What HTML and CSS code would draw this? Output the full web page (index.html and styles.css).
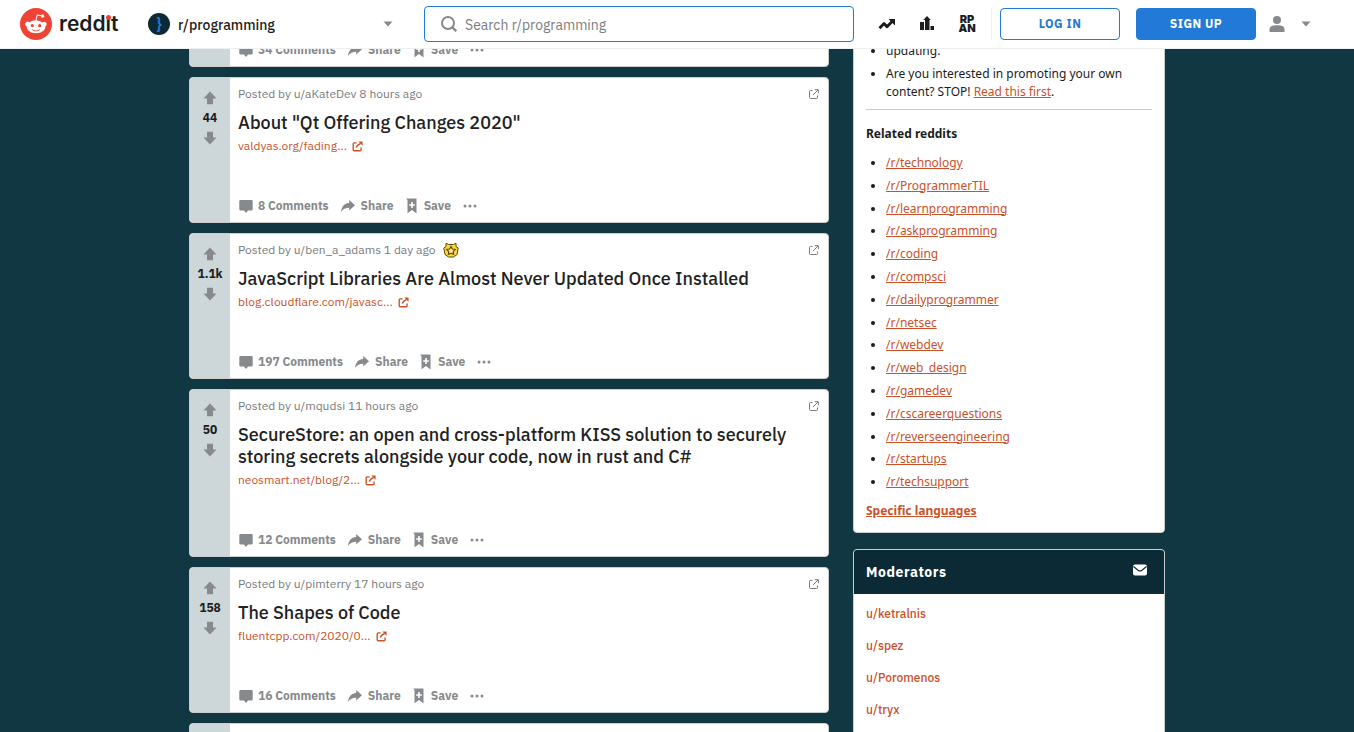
FILE: index.html
```
<!DOCTYPE html>
<html lang="en">
<head>
	<meta charset="UTF-8">
	<meta name="viewport" content="width=device-width, initial-scale=1">
	<title>r/programming</title>
	<link rel="stylesheet" href="styles.css">
</head>
<body>
<svg class="sprite" aria-hidden="true">
	<symbol id="i-up" viewBox="0 0 14 14"><path d="M7 0.5L13.6 7.6H10V13.3H4V7.6H0.4z"/></symbol>
	<symbol id="i-down" viewBox="0 0 14 14"><path d="M7 13.5L13.6 6.4H10V0.7H4V6.4H0.4z"/></symbol>
	<symbol id="i-comment" viewBox="0 0 14 14"><path d="M1.5 1h11a1.2 1.2 0 0 1 1.200 1.200v8a1.200 1.200 0 0 1-1.200 1.200H9L7 14 5 11.400H1.500a1.200 1.200 0 0 1-1.200-1.200v-8A1.200 1.200 0 0 1 1.500 1z"/></symbol>
	<symbol id="i-share" viewBox="0 0 14 14"><path d="M8.2 1L14 6.300 8.200 11.500V8.700C4.800 8.700 2 9.800 0 13 0.400 7.500 3.500 4.200 8.200 3.900z"/></symbol>
	<symbol id="i-save" viewBox="0 0 12 16"><path fill-rule="evenodd" d="M0 0.500H10.500V15.500L6 12 1.500 15.300V3.200C1.500 2 1 1.200 0 0.500zM5.200 4v2.200H3.200v1.600H5.200V10H6.800V7.800H8.800V6.200H6.800V4z"/></symbol>
	<symbol id="i-dots" viewBox="0 0 14 4"><circle cx="2" cy="2" r="1.500"/><circle cx="7" cy="2" r="1.500"/><circle cx="12" cy="2" r="1.500"/></symbol>
	<symbol id="i-out" viewBox="0 0 12 12"><path fill="none" stroke="currentColor" stroke-width="1.500" d="M5 2H2.500A1.200 1.200 0 0 0 1.300 3.200V9.500A1.200 1.200 0 0 0 2.500 10.700H8.700A1.200 1.200 0 0 0 9.900 9.500V7M4.800 7.200C5.300 5 6.800 3.600 9.500 2.500"/><path d="M7 0.600H11.500V5.100z"/></symbol>
	<symbol id="i-ext" viewBox="0 0 10 10"><path fill="none" stroke="currentColor" d="M3.500 1.500H1.500A1 1 0 0 0 0.500 2.500V8.500A1 1 0 0 0 1.500 9.500H7.500A1 1 0 0 0 8.500 8.500V6.500M4 6L9 1M5.800 0.700H9.400V4.200"/></symbol>
	<symbol id="i-caret" viewBox="0 0 10 6"><path d="M0.500 0.500H9.500L5 5.500z"/></symbol>
</svg>

<header class="topbar">
	<a class="logo" href="#" aria-label="reddit home">
		<svg class="snoo" viewBox="0 0 20 20"><circle cx="10" cy="10" r="10" fill="#ef4335"/><path fill="#fff" d="M16.67,10A1.46,1.46,0,0,0,14.2,9a7.12,7.12,0,0,0-3.85-1.23L11,4.65,13.14,5.1a1,1,0,1,0,.13-0.61L10.82,4a0.31,0.31,0,0,0-.37.24L9.71,7.71a7.14,7.14,0,0,0-3.9,1.23A1.46,1.46,0,1,0,4.2,11.33a2.87,2.87,0,0,0,0,.44c0,2.24,2.61,4.06,5.83,4.06s5.83-1.82,5.83-4.06a2.87,2.87,0,0,0,0-.44A1.46,1.46,0,0,0,16.67,10Zm-10,1a1,1,0,1,1,1,1A1,1,0,0,1,6.67,11Zm5.81,2.75a3.84,3.84,0,0,1-2.47.77,3.84,3.84,0,0,1-2.47-.77,0.27,0.27,0,0,1,.38-0.38A3.27,3.27,0,0,0,10,14a3.28,3.28,0,0,0,2.09-.61A0.27,0.27,0,1,1,12.48,13.79Zm-0.18-1.71a1,1,0,1,1,1-1A1,1,0,0,1,12.29,12.08Z"/></svg>
		<span class="wordmark">redd<span class="dotted">ı</span>t</span>
	</a>
	<button class="community" type="button">
		<span class="community-icon">}</span>
		<span class="community-name">r/programming</span>
		<svg class="caret"><use href="#i-caret"/></svg>
	</button>
	<form class="search">
		<svg class="search-icon" viewBox="0 0 16 16"><circle cx="7" cy="7" r="6" fill="none" stroke="currentColor" stroke-width="2"/><path d="M11 11L15.200 15.200" stroke="currentColor" stroke-width="2.400"/></svg>
		<input type="search" aria-label="Search r/programming" placeholder="Search r/programming">
	</form>
	<nav class="shortcuts">
		<a href="#" aria-label="Popular"><svg viewBox="0 0 18 18" width="18" height="18"><path fill="none" stroke="currentColor" stroke-width="2.800" stroke-linejoin="round" d="M1.500 13.200L6 8.500 9 11.800 14.300 6.300"/><path d="M10.500 4H17V10.500z"/></svg></a>
		<a href="#" aria-label="All"><svg viewBox="0 0 18 18" width="18" height="18"><path d="M2 7H6V15H2zM7 15V5H5.300L9 1 12.700 5H11.500V15zM12.500 11H16V15H12.500z"/></svg></a>
		<a class="rpan" href="#"><span>RP</span><span>AN</span></a>
	</nav>
	<div class="account">
		<button class="btn" type="button">LOG IN</button>
		<button class="btn btn-fill" type="button">SIGN UP</button>
		<button class="user" type="button" aria-label="User menu">
			<svg viewBox="0 0 16 16" width="16" height="16"><circle cx="8" cy="4" r="4"/><path d="M0.500 16V13.500C0.500 10.500 3 9.300 8 9.300S15.500 10.500 15.500 13.500V16z"/></svg>
			<svg class="caret"><use href="#i-caret"/></svg>
		</button>
	</div>
</header>

<div class="page">
	<main class="feed">
		<article class="post post-short">
			<div class="votes"></div>
			<div class="body">
				<div class="actions">
					<a href="#"><svg class="ic"><use href="#i-comment"/></svg>34 Comments</a>
					<button type="button"><svg class="ic"><use href="#i-share"/></svg>Share</button>
					<button type="button"><svg class="ic-save"><use href="#i-save"/></svg>Save</button>
					<button type="button" aria-label="More"><svg class="ic-dots"><use href="#i-dots"/></svg></button>
				</div>
			</div>
		</article>

		<article class="post">
			<div class="votes">
				<button type="button" aria-label="upvote"><svg class="ic"><use href="#i-up"/></svg></button>
				<span>44</span>
				<button type="button" aria-label="downvote"><svg class="ic"><use href="#i-down"/></svg></button>
			</div>
			<div class="body">
				<div class="meta"><span>Posted by u/aKateDev 8 hours ago</span><svg class="ext"><use href="#i-ext"/></svg></div>
				<h3>About "Qt Offering Changes 2020"</h3>
				<a class="source" href="#">valdyas.org/fading... <svg><use href="#i-out"/></svg></a>
				<div class="actions">
					<a href="#"><svg class="ic"><use href="#i-comment"/></svg>8 Comments</a>
					<button type="button"><svg class="ic"><use href="#i-share"/></svg>Share</button>
					<button type="button"><svg class="ic-save"><use href="#i-save"/></svg>Save</button>
					<button type="button" aria-label="More"><svg class="ic-dots"><use href="#i-dots"/></svg></button>
				</div>
			</div>
		</article>

		<article class="post">
			<div class="votes">
				<button type="button" aria-label="upvote"><svg class="ic"><use href="#i-up"/></svg></button>
				<span>1.1k</span>
				<button type="button" aria-label="downvote"><svg class="ic"><use href="#i-down"/></svg></button>
			</div>
			<div class="body">
				<div class="meta"><span>Posted by u/ben_a_adams 1 day ago</span>
					<svg class="award" viewBox="0 0 16 16"><path fill="#ffd635" stroke="#5c4a12" d="M3 1.200L5.500 2.500H10.500L13 1.200 13 4.500 15.200 6 14 12.500 10.500 15H5.500L2 12.500 0.800 6 3 4.500z"/><path fill="#ffe98a" stroke="#5c4a12" stroke-width="1.200" d="M8 4.500L9.400 7 12.200 7.500 10.300 9.600 10.600 12.400 8 11.300 5.400 12.400 5.700 9.600 3.800 7.500 6.600 7z"/></svg>
					<svg class="ext"><use href="#i-ext"/></svg></div>
				<h3>JavaScript Libraries Are Almost Never Updated Once Installed</h3>
				<a class="source" href="#">blog.cloudflare.com/javasc... <svg><use href="#i-out"/></svg></a>
				<div class="actions">
					<a href="#"><svg class="ic"><use href="#i-comment"/></svg>197 Comments</a>
					<button type="button"><svg class="ic"><use href="#i-share"/></svg>Share</button>
					<button type="button"><svg class="ic-save"><use href="#i-save"/></svg>Save</button>
					<button type="button" aria-label="More"><svg class="ic-dots"><use href="#i-dots"/></svg></button>
				</div>
			</div>
		</article>

		<article class="post">
			<div class="votes">
				<button type="button" aria-label="upvote"><svg class="ic"><use href="#i-up"/></svg></button>
				<span>50</span>
				<button type="button" aria-label="downvote"><svg class="ic"><use href="#i-down"/></svg></button>
			</div>
			<div class="body">
				<div class="meta"><span>Posted by u/mqudsi 11 hours ago</span><svg class="ext"><use href="#i-ext"/></svg></div>
				<h3>SecureStore: an open and cross-platform KISS solution to securely storing secrets alongside your code, now in rust and C#</h3>
				<a class="source" href="#">neosmart.net/blog/2... <svg><use href="#i-out"/></svg></a>
				<div class="actions">
					<a href="#"><svg class="ic"><use href="#i-comment"/></svg>12 Comments</a>
					<button type="button"><svg class="ic"><use href="#i-share"/></svg>Share</button>
					<button type="button"><svg class="ic-save"><use href="#i-save"/></svg>Save</button>
					<button type="button" aria-label="More"><svg class="ic-dots"><use href="#i-dots"/></svg></button>
				</div>
			</div>
		</article>

		<article class="post">
			<div class="votes">
				<button type="button" aria-label="upvote"><svg class="ic"><use href="#i-up"/></svg></button>
				<span>158</span>
				<button type="button" aria-label="downvote"><svg class="ic"><use href="#i-down"/></svg></button>
			</div>
			<div class="body">
				<div class="meta"><span>Posted by u/pimterry 17 hours ago</span><svg class="ext"><use href="#i-ext"/></svg></div>
				<h3>The Shapes of Code</h3>
				<a class="source" href="#">fluentcpp.com/2020/0... <svg><use href="#i-out"/></svg></a>
				<div class="actions">
					<a href="#"><svg class="ic"><use href="#i-comment"/></svg>16 Comments</a>
					<button type="button"><svg class="ic"><use href="#i-share"/></svg>Share</button>
					<button type="button"><svg class="ic-save"><use href="#i-save"/></svg>Save</button>
					<button type="button" aria-label="More"><svg class="ic-dots"><use href="#i-dots"/></svg></button>
				</div>
			</div>
		</article>

		<article class="post">
			<div class="votes"></div>
			<div class="body"></div>
		</article>
	</main>

	<aside class="side">
		<section class="card rules">
			<ul class="notes">
				<li>updating.</li>
				<li>Are you interested in promoting your own content? STOP! <a href="#">Read this first</a>.</li>
			</ul>
			<hr>
			<h4>Related reddits</h4>
			<ul class="related">
				<li><a href="#">/r/technology</a></li>
				<li><a href="#">/r/ProgrammerTIL</a></li>
				<li><a href="#">/r/learnprogramming</a></li>
				<li><a href="#">/r/askprogramming</a></li>
				<li><a href="#">/r/coding</a></li>
				<li><a href="#">/r/compsci</a></li>
				<li><a href="#">/r/dailyprogrammer</a></li>
				<li><a href="#">/r/netsec</a></li>
				<li><a href="#">/r/webdev</a></li>
				<li><a href="#">/r/web_design</a></li>
				<li><a href="#">/r/gamedev</a></li>
				<li><a href="#">/r/cscareerquestions</a></li>
				<li><a href="#">/r/reverseengineering</a></li>
				<li><a href="#">/r/startups</a></li>
				<li><a href="#">/r/techsupport</a></li>
			</ul>
			<h4><a href="#">Specific languages</a></h4>
		</section>

		<section class="card mods">
			<div class="mods-head">
				<h2>Moderators</h2>
				<a href="#" aria-label="Message the moderators"><svg viewBox="0 0 14 12" width="14" height="12"><rect y="0.500" width="14" height="11" rx="2" fill="#fff"/><path d="M0.500 2.500L5 6.200C6.300 7.200 7.700 7.200 9 6.200L13.500 2.500" fill="none" stroke="#0b2a35" stroke-width="1.200"/></svg></a>
			</div>
			<ul>
				<li><a href="#">u/ketralnis</a></li>
				<li><a href="#">u/spez</a></li>
				<li><a href="#">u/Poromenos</a></li>
				<li><a href="#">u/tryx</a></li>
			</ul>
		</section>
	</aside>
</div>
</body>
</html>
```
FILE: styles.css
```
*{box-sizing:border-box;}
body,ul,h2,h3,h4{margin:0;padding:0;}
body{
	background:#113743;
	color:#1c1c1c;
	font-family:"IBM Plex Sans",Roboto,"Liberation Sans",sans-serif;
	font-size:12px;
	line-height:16px;
}
a{color:#cc5129;text-decoration:none;}
button{
	font:inherit;
	color:inherit;
	background:none;
	border:0;
	padding:0;
	cursor:pointer;
}
svg{fill:currentColor;flex:none;}
.sprite{position:absolute;width:0;height:0;}

/* top bar */
.topbar{
	position:fixed;
	top:0;
	left:0;
	right:0;
	z-index:10;
	height:49px;
	padding:0 43px 0 20px;
	display:flex;
	align-items:center;
	background:#fff;
	border-bottom:1px solid #edeff1;
}
.logo{
	display:flex;
	align-items:center;
	gap:7px;
	width:128px;
	color:#1c1c1c;
}
.snoo{width:32px;height:32px;}
.wordmark{
	font-family:Inter,sans-serif;
	font-size:21px;
	font-weight:600;
	line-height:32px;
}
.dotted{position:relative;}
.dotted:before{
	content:"";
	position:absolute;
	left:0;
	top:4px;
	width:5px;
	height:5px;
	border-radius:50%;
	background:#ef4335;
}
.community{
	display:flex;
	align-items:center;
	gap:8px;
	width:245px;
	font-size:14px;
	text-align:left;
}
.community-icon{
	width:22px;
	height:22px;
	border-radius:50%;
	background:#0b2a35;
	color:#2379d8;
	font-size:16px;
	font-weight:600;
	line-height:20px;
	text-align:center;
}
.community-name{flex:1;padding-top:2px;font-weight:500;}
.caret{width:10px;height:6px;color:#878a8c;}
.search{
	flex:1;
	height:36px;
	margin:0 13px 0 31px;
	padding:0 16px;
	display:flex;
	align-items:center;
	gap:8px;
	border:1px solid #2379d8;
	border-radius:4px;
}
.search-icon{width:16px;height:16px;color:#878a8c;}
.search input{
	flex:1;
	min-width:0;
	padding:2px 0 0;
	border:0;
	outline:0;
	background:none;
	font:14px/20px "IBM Plex Sans",Roboto,sans-serif;
}
.search input::placeholder{color:#7c7c7c;}
.shortcuts{display:flex;}
.shortcuts a{
	width:40px;
	height:32px;
	display:flex;
	align-items:center;
	justify-content:center;
	color:#1c1c1c;
}
.shortcuts .rpan{
	flex-direction:column;
	font-family:Inter,sans-serif;
	font-size:11px;
	font-weight:900;
	line-height:9px;
}
.account{
	display:flex;
	align-items:center;
	gap:16px;
	margin-left:4px;
	padding-left:8px;
	border-left:1px solid #edeff1;
}
.btn{
	width:120px;
	height:32px;
	border:1px solid #2379d8;
	border-radius:4px;
	color:#2379d8;
	font-size:12px;
	font-weight:700;
	letter-spacing:0.04em;
}
.btn-fill{background:#2379d8;color:#fff;}
.user{
	display:flex;
	align-items:center;
	gap:16px;
	margin-left:-3px;
	color:#878a8c;
}

/* columns */
.page{
	height:100vh;
	overflow:hidden;
	display:flex;
	justify-content:center;
	align-items:flex-start;
	gap:24px;
}
.feed{flex:0 1 640px;}

.post{
	display:flex;
	min-height:146px;
	margin-bottom:10px;
	background:#fff;
	border:1px solid #ccc;
	border-radius:4px;
	overflow:hidden;
}
.post-short{min-height:67px;}
.votes{
	flex:none;
	width:40px;
	padding-top:12px;
	display:flex;
	flex-direction:column;
	align-items:center;
	background:#cdd6d9;
	font-weight:700;
}
.votes span{line-height:24px;}
.votes button{height:16px;color:#878a8c;}
.votes svg{display:block;}
.ic{width:14px;height:14px;}
.body{
	flex:1;
	min-width:0;
	padding:8px 8px 0;
	display:flex;
	flex-direction:column;
}
.meta{
	display:flex;
	align-items:center;
	gap:8px;
	height:16px;
	color:#787c7e;
}
.ext{width:10px;height:10px;margin:0 1px 0 auto;}
.award{width:16px;height:16px;}
.post h3{
	margin-top:10px;
	color:#222;
	font-size:18px;
	font-weight:500;
	line-height:22px;
}
.source{
	display:flex;
	align-items:center;
	gap:5px;
	margin:4px 0 36px;
}
.source svg{width:11px;height:11px;}
.actions{
	display:flex;
	align-items:center;
	gap:12px;
	height:32px;
	margin-top:auto;
	padding-left:1px;
	color:#878a8c;
	font-weight:700;
}
.actions a,.actions button{
	display:flex;
	align-items:center;
	gap:5px;
	color:#878a8c;
}
.actions button{gap:6px;}
.ic-save{width:12px;height:16px;}
.ic-dots{width:14px;height:4px;}

/* sidebar */
.side{flex:0 0 312px;}
.card{
	margin-bottom:16px;
	background:#fff;
	border:1px solid #ccc;
	border-radius:4px;
	overflow:hidden;
}
.rules{
	padding:41px 12px 12px;
	font-family:"Noto Sans",sans-serif;
	line-height:18px;
}
.rules a{text-decoration:underline;}
.rules ul{padding-left:20px;}
.notes li{margin-bottom:5px;}
.rules hr{
	height:1px;
	margin:8px 0 15px;
	border:0;
	background:#ccc;
}
.rules h4{font-size:12px;font-weight:700;}
.related{margin:9px 0 8px;line-height:1.9;}
.mods-head{
	display:flex;
	align-items:center;
	justify-content:space-between;
	height:44px;
	padding:0 17px 0 12px;
	background:#0b2a35;
	color:#fff;
}
.mods-head h2{
	font-size:14px;
	font-weight:700;
	letter-spacing:0.04em;
}
.mods ul{
	padding:4px 12px 12px;
	list-style:none;
	font-weight:500;
	line-height:32px;
}
```
